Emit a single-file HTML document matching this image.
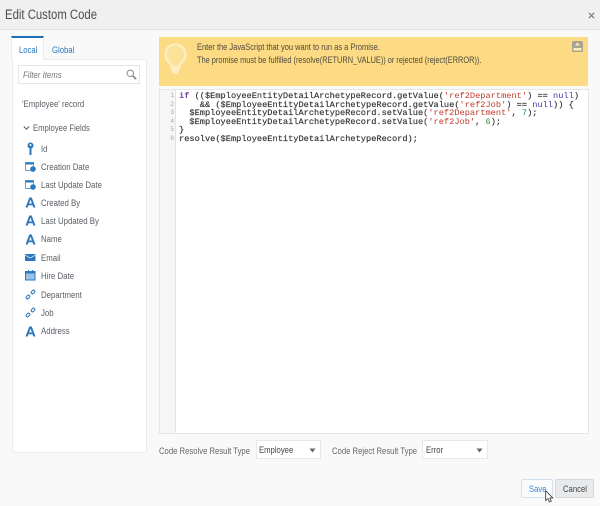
<!DOCTYPE html>
<html><head><meta charset="utf-8">
<style>
html,body{margin:0;padding:0;width:600px;height:506px;overflow:hidden;background:#f9f9f9;}
body{position:relative;font-family:"Liberation Sans",sans-serif;color:#565a5e;}
.a{position:absolute;white-space:nowrap;}
#wrap{position:absolute;left:0;top:0;width:600px;height:506px;filter:blur(.35px);}
.t{font-size:8.8px;line-height:12px;color:#5a5f65;transform:scaleX(.875);transform-origin:0 0;}
.f{transform:scaleX(.89);}
.b{transform:scaleX(.84);color:#4f4a3c;}
.code{position:absolute;left:179px;font:8.66px/8.6px "Liberation Mono",monospace;color:#333;white-space:pre;-webkit-text-stroke:.15px #333;}
.code span{-webkit-text-stroke:0;}
.k{color:#7a3e9d}.s{color:#c0392b}.n{color:#3a3ab0}.g{color:#2a8a4a}
.ln{position:absolute;left:159px;width:15px;text-align:right;font:6.5px/8.6px "Liberation Sans",sans-serif;color:#aaa;}
svg{position:absolute;display:block;}
</style></head><body>
<div id="wrap">
<div class="a" style="left:0;top:0;width:600px;height:29px;background:#f0f0f0;border-bottom:1px solid #e2e2e2;"></div>
<div class="a" style="left:5px;top:5px;font-size:13.5px;line-height:19px;color:#4a4f54;transform:scaleX(.84);transform-origin:0 0;">Edit Custom Code</div>
<svg style="left:588px;top:12px" width="7" height="7" viewBox="0 0 7 7"><path d="M.8.8l5.4 5.4M6.200.8L.8 6.200" stroke="#777b80" stroke-width="1.100"/></svg>

<!-- left panel -->
<div class="a" style="left:12px;top:59px;width:135px;height:394px;background:#fff;border:1px solid #e8edf1;border-radius:2px;box-sizing:border-box;"></div>
<div class="a" style="left:11px;top:36px;width:33px;height:24px;background:#fff;border-top:2px solid #1e6fb8;border-left:1px solid #e8edf1;border-right:1px solid #e8edf1;box-sizing:border-box;"></div>
<div class="a t" style="left:19px;top:44px;color:#2a78bd;">Local</div>
<div class="a t" style="left:52px;top:44px;color:#2a78bd;">Global</div>
<div class="a" style="left:18px;top:65px;width:122px;height:19px;background:#fff;border:1px solid #e4e7ea;box-sizing:border-box;"></div>
<div class="a t f" style="left:23px;top:69px;font-style:italic;color:#777;">Filter Items</div>
<svg style="left:126px;top:69px" width="11" height="11" viewBox="0 0 11 11"><circle cx="4.300" cy="4.300" r="3.200" fill="none" stroke="#8a8e92" stroke-width="1"/><path d="M6.800 6.800l3.400 3.400" stroke="#7c8084" stroke-width="1.600"/></svg>
<div class="a t f" style="left:22px;top:98px;">'Employee' record</div>
<svg style="left:23px;top:125px" width="7" height="6" viewBox="0 0 7 6"><path d="M.8 1.500l2.700 2.700 2.700-2.700" fill="none" stroke="#555" stroke-width="1"/></svg>
<div class="a t" style="left:33px;top:122px;">Employee Fields</div>

<!-- key -->
<svg style="left:26px;top:142px" width="9" height="14" viewBox="0 0 9 14"><circle cx="4.500" cy="3.500" r="3" fill="#2a78bd"/><rect x="3.500" y="5" width="2" height="8" fill="#2a78bd"/><circle cx="4.500" cy="3" r="1" fill="#fff"/></svg>
<div class="a t" style="left:41px;top:143px;">Id</div>
<!-- calendar clock -->
<svg style="left:25px;top:161px" width="11" height="11" viewBox="0 0 11 11"><rect x=".5" y="1.500" width="8" height="8" fill="#fff" stroke="#6aa3d3"/><rect x=".5" y="1.500" width="8" height="2" fill="#2a78bd"/><circle cx="8" cy="8" r="2.800" fill="#2a78bd"/></svg>
<div class="a t f" style="left:41px;top:161px;">Creation Date</div>
<svg style="left:25px;top:179px" width="11" height="11" viewBox="0 0 11 11"><rect x=".5" y="1.500" width="8" height="8" fill="#fff" stroke="#6aa3d3"/><rect x=".5" y="1.500" width="8" height="2" fill="#2a78bd"/><circle cx="8" cy="8" r="2.800" fill="#2a78bd"/></svg>
<div class="a t f" style="left:41px;top:179px;">Last Update Date</div>
<svg style="left:25px;top:197px" width="11" height="11" viewBox="0 0 11 11"><path d="M.5 10.500L4.300 .5h2.400l3.800 10h-2.200l-.8-2.300H3.500l-.8 2.300zM4.100 6.500h2.800L5.500 2.600z" fill="#2a78bd" fill-rule="evenodd"/></svg>
<div class="a t f" style="left:41px;top:197px;">Created By</div>
<svg style="left:25px;top:215px" width="11" height="11" viewBox="0 0 11 11"><path d="M.5 10.500L4.300 .5h2.400l3.800 10h-2.200l-.8-2.300H3.500l-.8 2.300zM4.100 6.500h2.800L5.500 2.600z" fill="#2a78bd" fill-rule="evenodd"/></svg>
<div class="a t f" style="left:41px;top:215px;">Last Updated By</div>
<svg style="left:25px;top:234px" width="11" height="11" viewBox="0 0 11 11"><path d="M.5 10.500L4.300 .5h2.400l3.800 10h-2.200l-.8-2.300H3.500l-.8 2.300zM4.100 6.500h2.800L5.500 2.600z" fill="#2a78bd" fill-rule="evenodd"/></svg>
<div class="a t f" style="left:41px;top:233px;">Name</div>
<svg style="left:25px;top:253px" width="11" height="9" viewBox="0 0 11 9"><rect x="0" y="1" width="10.500" height="7" fill="#2a78bd"/><path d="M0 2l5.200 3 5.300-3" fill="none" stroke="#cfe2f2" stroke-width=".8"/></svg>
<div class="a t f" style="left:41px;top:252px;">Email</div>
<svg style="left:25px;top:270px" width="11" height="11" viewBox="0 0 11 11"><rect x=".5" y="1.500" width="9.500" height="8.500" fill="#9cc3e4" stroke="#2a78bd"/><rect x=".5" y="1.500" width="9.500" height="2" fill="#2a78bd"/><path d="M3.500 1v-1M7.500 1v-1" stroke="#2a78bd"/></svg>
<div class="a t f" style="left:41px;top:270px;">Hire Date</div>
<svg style="left:25px;top:289px" width="11" height="11" viewBox="0 0 11 11"><rect x="-2" y="-1.300" width="4" height="2.600" rx="1.200" transform="translate(3 8) rotate(-45)" fill="none" stroke="#2a78bd"/><rect x="-2" y="-1.300" width="4" height="2.600" rx="1.200" transform="translate(8 3) rotate(-45)" fill="none" stroke="#2a78bd"/></svg>
<div class="a t f" style="left:41px;top:289px;">Department</div>
<svg style="left:25px;top:307px" width="11" height="11" viewBox="0 0 11 11"><rect x="-2" y="-1.300" width="4" height="2.600" rx="1.200" transform="translate(3 8) rotate(-45)" fill="none" stroke="#2a78bd"/><rect x="-2" y="-1.300" width="4" height="2.600" rx="1.200" transform="translate(8 3) rotate(-45)" fill="none" stroke="#2a78bd"/></svg>
<div class="a t f" style="left:41px;top:307px;">Job</div>
<svg style="left:25px;top:326px" width="11" height="11" viewBox="0 0 11 11"><path d="M.5 10.500L4.300 .5h2.400l3.800 10h-2.200l-.8-2.300H3.500l-.8 2.300zM4.100 6.500h2.800L5.500 2.600z" fill="#2a78bd" fill-rule="evenodd"/></svg>
<div class="a t f" style="left:41px;top:325px;">Address</div>

<!-- banner -->
<div class="a" style="left:159px;top:37px;width:429px;height:49px;background:#fddb85;"></div>
<svg style="left:164px;top:43px" width="23" height="33" viewBox="0 0 23 33"><path d="M11.500 1.500a10 10 0 0 0-6 18c1.500 1.300 2 3 2 4.500h8c0-1.500.5-3.200 2-4.500a10 10 0 0 0-6-18z" fill="#fde09a" stroke="#fdeebf" stroke-width="2.500"/><path d="M7.500 25h8v3l-2 3h-4l-2-3z" fill="#fdeebf"/></svg>
<div class="a t b" style="left:197px;top:41px;transform:scaleX(.85);">Enter the JavaScript that you want to run as a Promise.</div>
<div class="a t b" style="left:197px;top:54px;">The promise must be fulfilled (resolve(RETURN_VALUE)) or rejected (reject(ERROR)).</div>
<svg style="left:572px;top:41px" width="11" height="11" viewBox="0 0 11 11"><rect width="11" height="11" rx="1.500" fill="#a9a48f"/><rect x="1.500" y="7" width="8" height="2.500" fill="#fdeebf"/><path d="M5.500 1.500l2.500 3H3z" fill="#fdeebf"/></svg>

<!-- editor -->
<div class="a" style="left:159px;top:89px;width:430px;height:345px;background:#fff;border:1px solid #e6e6e6;box-sizing:border-box;"></div>
<div class="a" style="left:160px;top:90px;width:16px;height:343px;background:#f6f6f6;border-right:1px solid #e2e2e2;box-sizing:border-box;"></div>
<div class="ln" style="top:92px;">1<br>2<br>3<br>4<br>5<br>6</div>
<div class="code" style="top:92px;"><span class="k" style="font-weight:bold">if</span> (($EmployeeEntityDetailArchetypeRecord.getValue(<span class="s">'ref2Department'</span>) == <span class="n">null</span>)
    &amp;&amp; ($EmployeeEntityDetailArchetypeRecord.getValue(<span class="s">'ref2Job'</span>) == <span class="n">null</span>)) {
  $EmployeeEntityDetailArchetypeRecord.setValue(<span class="s">'ref2Department'</span>, <span class="g">7</span>);
  $EmployeeEntityDetailArchetypeRecord.setValue(<span class="s">'ref2Job'</span>, <span class="g">6</span>);
}
resolve($EmployeeEntityDetailArchetypeRecord);</div>

<!-- bottom -->
<div class="a t" style="left:159px;top:445px;color:#666;">Code Resolve Result Type</div>
<div class="a" style="left:256px;top:440px;width:65px;height:19px;background:#fff;border:1px solid #e8e8e8;box-sizing:border-box;"></div>
<div class="a t" style="left:259px;top:444px;color:#444;">Employee</div>
<svg style="left:309px;top:448px" width="7" height="5" viewBox="0 0 7 5"><path d="M.5.500h6L3.500 4.500z" fill="#666"/></svg>
<div class="a t" style="left:332px;top:445px;color:#666;">Code Reject Result Type</div>
<div class="a" style="left:422px;top:440px;width:66px;height:19px;background:#fff;border:1px solid #e8e8e8;box-sizing:border-box;"></div>
<div class="a t" style="left:426px;top:444px;color:#444;">Error</div>
<svg style="left:476px;top:448px" width="7" height="5" viewBox="0 0 7 5"><path d="M.5.500h6L3.500 4.500z" fill="#666"/></svg>

<div class="a" style="left:521px;top:479px;width:32px;height:19px;background:#fafbfd;border:1px solid #d4e1ee;box-sizing:border-box;border-radius:2px;"></div>
<div class="a t" style="left:529px;top:483px;color:#3d8ad0;">Save</div>
<div class="a" style="left:555px;top:479px;width:39px;height:19px;background:#e9eaec;border:1px solid #d6d8db;box-sizing:border-box;border-radius:2px;"></div>
<div class="a t" style="left:563px;top:483px;color:#444;">Cancel</div>
<svg style="left:545px;top:490px" width="9" height="13" viewBox="0 0 9 13"><path d="M.7.700v9.800l2.300-2 1.500 3.500 1.800-.8L4.800 8h3z" fill="#fff" stroke="#333" stroke-width=".8"/></svg>
</div>
</body></html>
